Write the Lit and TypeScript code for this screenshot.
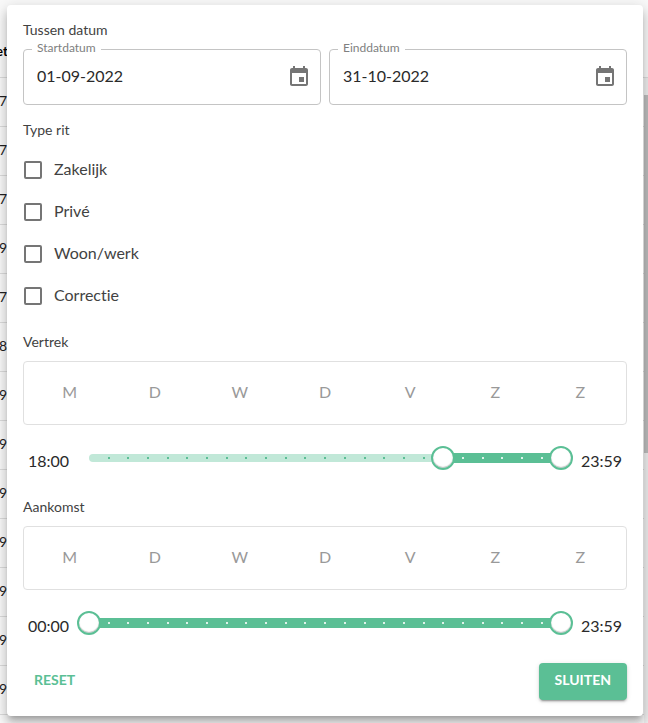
import { LitElement, html, css, svg } from "lit";
import { customElement, property, state } from "lit/decorators.js";

const DAY_MINUTES = 1440;

const formatTime = (minutes: number) =>
  `${String(Math.floor(minutes / 60)).padStart(2, "0")}:${String(minutes % 60).padStart(2, "0")}`;

const eventIcon = svg`<path d="M17 12h-5v5h5v-5zM16 1v2H8V1H6v2H5c-1.11 0-1.99.9-1.99 2L3 19c0 1.1.89 2 2 2h14c1.1 0 2-.9 2-2V5c0-1.1-.9-2-2-2h-1V1h-2zm3 18H5V8h14v11z"/>`;

@customElement("date-field")
class DateField extends LitElement {
  @property() label = "";
  @property() value = "";

  static styles = css`
    :host {
      display: block;
    }
    .field {
      position: relative;
      display: flex;
      align-items: center;
      height: 56px;
      box-sizing: border-box;
      padding: 0 9px 0 13px;
      border: 1px solid #c4c4c4;
      border-radius: 4px;
    }
    .label {
      position: absolute;
      top: -10px;
      left: 8px;
      padding: 0 5px;
      background: #fff;
      color: #808080;
      font-size: 12px;
      line-height: 16px;
    }
    .input {
      flex: 1;
      min-width: 0;
      padding: 0 0 3px;
      border: 0;
      outline: 0;
      background: none;
      color: #2a2a2a;
      font: inherit;
      font-size: 16px;
    }
    .open {
      display: flex;
      padding: 0;
      border: 0;
      background: none;
      color: #757575;
      cursor: pointer;
    }
    .icon {
      width: 24px;
      height: 24px;
      fill: currentColor;
    }
  `;

  render() {
    return html`
      <div class="field">
        <label class="label" for="date">${this.label}</label>
        <input class="input" id="date" type="text" inputmode="numeric" .value=${this.value} />
        <button class="open" type="button" aria-label="Kies ${this.label}">
          <svg class="icon" viewBox="0 0 24 24" aria-hidden="true">${eventIcon}</svg>
        </button>
      </div>
    `;
  }
}

@customElement("time-range")
class TimeRange extends LitElement {
  @property({ type: Number }) from = 0;
  @property({ type: Number }) to = DAY_MINUTES - 1;
  @property() name = "";

  static styles = css`
    :host {
      display: grid;
      grid-template-columns: 46px 1fr 46px;
      column-gap: 8px;
      padding-top: 16px;
      min-height: 41px;
      color: #2a2a2a;
      font-size: 16px;
      line-height: 24px;
    }
    .time {
      align-self: center;
      padding-bottom: 2px;
    }
    .start {
      text-align: right;
    }
    .slider {
      display: grid;
      align-self: start;
      align-items: center;
      height: 34px;
    }
    .slider > * {
      grid-area: 1 / 1;
    }
    .rail {
      position: relative;
      height: 8px;
      margin: 0 12px;
      border-radius: 4px;
      background: #c1e8d8;
    }
    .active {
      position: absolute;
      top: -1px;
      bottom: -1px;
      border-radius: 5px;
      background: #5bbf95;
    }
    .mark {
      position: absolute;
      top: 3px;
      width: 2px;
      height: 2px;
      margin-left: -1px;
      background: #5bbf95;
    }
    .mark.on {
      background: #dff3ea;
    }
    .range {
      position: relative;
      appearance: none;
      width: 100%;
      height: 24px;
      margin: 0;
      background: none;
      pointer-events: none;
    }
    .range::-webkit-slider-thumb {
      appearance: none;
      box-sizing: border-box;
      width: 24px;
      height: 24px;
      border: 2px solid #5bbf95;
      border-radius: 50%;
      background: #fff;
      box-shadow: inset 0 -1px 1px rgba(0, 0, 0, 0.25);
      pointer-events: auto;
      cursor: pointer;
    }
  `;

  private onFrom(e: Event) {
    this.from = Math.min(Number((e.target as HTMLInputElement).value), this.to);
  }

  private onTo(e: Event) {
    this.to = Math.max(Number((e.target as HTMLInputElement).value), this.from);
  }

  render() {
    const pct = (m: number) => (m / (DAY_MINUTES - 1)) * 100;
    const hours = Array.from({ length: 23 }, (_, i) => i + 1).filter((h) => h * 60 !== this.from);
    return html`
      <span class="time start">${formatTime(this.from)}</span>
      <div class="slider">
        <div class="rail">
          <div class="active" style="left:${pct(this.from)}%;right:${100 - pct(this.to)}%"></div>
          ${hours.map((h) => {
            const m = h * 60;
            const on = m >= this.from && m <= this.to;
            return html`<span class="mark ${on ? "on" : ""}" style="left:${pct(m)}%"></span>`;
          })}
        </div>
        <input class="range" type="range" min="0" max="1439" aria-label="${this.name} vanaf"
          .value=${String(this.from)} @input=${this.onFrom} />
        <input class="range" type="range" min="0" max="1439" aria-label="${this.name} tot"
          .value=${String(this.to)} @input=${this.onTo} />
      </div>
      <span class="time">${formatTime(this.to)}</span>
    `;
  }
}

@customElement("app-root")
class AppRoot extends LitElement {
  @state() private days: Record<string, boolean> = {};

  private rows = ["7", "7", "7", "9", "7", "8", "9", "9", "9", "9", "9", "9", "9"];
  private types = ["Zakelijk", "Privé", "Woon/werk", "Correctie"];
  private weekdays = ["M", "D", "W", "D", "V", "Z", "Z"];

  static styles = css`
    :host {
      display: block;
      position: relative;
      box-sizing: border-box;
      min-height: 100vh;
      padding: 5px 5px 7px 7px;
      overflow: hidden;
      background: #f9f9f9;
      color: #424242;
      font-family: Lato, "Open Sans", sans-serif;
      font-variant-ligatures: none;
    }

    /* Trip table behind the panel */
    .backdrop {
      position: absolute;
      inset: 0;
      overflow: hidden;
    }
    .trips {
      width: 100%;
      border-collapse: separate;
      border-spacing: 0;
      color: #212121;
      font-size: 14px;
    }
    .trips th,
    .trips td {
      box-sizing: border-box;
      height: 49px;
      padding: 0 0 3px;
      border-bottom: 1px solid #dcdcdc;
      text-align: left;
      text-indent: -1px;
    }
    .trips th {
      height: 78px;
      padding-top: 27px;
      color: #000;
      font-size: 13px;
      text-indent: -4px;
    }
    .scrollbar {
      position: absolute;
      top: 78px;
      right: 0;
      bottom: 0;
      display: flex;
      flex-direction: column;
      width: 4px;
      padding-top: 17px;
      background: #eeeeee;
    }
    .thumb {
      height: 57%;
      background: #bcbcbc;
    }

    .panel {
      position: relative;
      padding: 16px;
      border-radius: 4px;
      background: #fff;
      box-shadow:
        0 5px 5px -3px rgba(0, 0, 0, 0.2),
        0 8px 10px 1px rgba(0, 0, 0, 0.14),
        0 3px 14px 2px rgba(0, 0, 0, 0.12);
    }
    .section {
      margin: 0 0 16px;
    }
    .title {
      margin: 0 0 8px;
      padding-bottom: 2px;
      font-size: 14px;
      font-weight: 400;
      line-height: 18px;
    }
    .dates {
      display: grid;
      grid-template-columns: 1fr 1fr;
      gap: 8px;
    }
    .option {
      display: flex;
      align-items: center;
      gap: 12px;
      height: 42px;
      padding-left: 1px;
      font-size: 16px;
      cursor: pointer;
    }
    .name {
      padding-bottom: 3px;
    }
    .check {
      appearance: none;
      box-sizing: border-box;
      width: 18px;
      height: 18px;
      margin: 0;
      border: 2px solid #757575;
      border-radius: 2px;
    }
    .check:checked {
      border-color: #5bbf95;
      background: #5bbf95;
    }
    .days {
      display: grid;
      grid-template-columns: repeat(7, 1fr);
      box-sizing: border-box;
      height: 64px;
      padding: 3px;
      border: 1px solid #e0e0e0;
      border-radius: 4px;
    }
    .day {
      padding: 0 0 3px;
      border: 0;
      border-radius: 4px;
      background: none;
      color: #999;
      font: inherit;
      font-size: 16px;
      cursor: pointer;
    }
    .day.selected {
      background: #c1e8d8;
      color: #212121;
    }
    .actions {
      display: flex;
      justify-content: space-between;
    }
    .button {
      height: 37px;
      border: 0;
      border-radius: 4px;
      font: inherit;
      font-size: 14px;
      font-weight: 700;
      text-transform: uppercase;
      cursor: pointer;
    }
    .text {
      padding: 0 11px 4px;
      background: none;
      color: #5bbf95;
    }
    .contained {
      padding: 0 16px 4px;
      background: #5bbf95;
      color: #fff;
      box-shadow:
        0 3px 1px -2px rgba(0, 0, 0, 0.2),
        0 2px 2px 0 rgba(0, 0, 0, 0.14),
        0 1px 5px 0 rgba(0, 0, 0, 0.12);
    }
  `;

  private toggleDay(key: string) {
    this.days = { ...this.days, [key]: !this.days[key] };
  }

  private renderMoment(name: string, from: number, to: number) {
    return html`
      <section class="section">
        <h2 class="title">${name}</h2>
        <div class="days">
          ${this.weekdays.map((d, i) => {
            const key = `${name}-${i}`;
            return html`<button class="day ${this.days[key] ? "selected" : ""}" type="button"
              aria-pressed=${this.days[key] ? "true" : "false"}
              @click=${() => this.toggleDay(key)}>${d}</button>`;
          })}
        </div>
        <time-range .name=${name} .from=${from} .to=${to}></time-range>
      </section>
    `;
  }

  render() {
    return html`
      <div class="backdrop">
        <table class="trips">
          <thead><tr><th>et</th></tr></thead>
          <tbody>${this.rows.map((r) => html`<tr><td>${r}</td></tr>`)}</tbody>
        </table>
        <div class="scrollbar"><div class="thumb"></div></div>
      </div>
      <form class="panel" @submit=${(e: Event) => e.preventDefault()}>
        <section class="section">
          <h2 class="title">Tussen datum</h2>
          <div class="dates">
            <date-field label="Startdatum" value="01-09-2022"></date-field>
            <date-field label="Einddatum" value="31-10-2022"></date-field>
          </div>
        </section>
        <section class="section">
          <h2 class="title">Type rit</h2>
          ${this.types.map((t) => html`
            <label class="option"><input class="check" type="checkbox" /><span class="name">${t}</span></label>`)}
        </section>
        ${this.renderMoment("Vertrek", 1080, 1439)}
        ${this.renderMoment("Aankomst", 0, 1439)}
        <div class="actions">
          <button class="button text" type="reset">Reset</button>
          <button class="button contained" type="button">Sluiten</button>
        </div>
      </form>
    `;
  }
}
